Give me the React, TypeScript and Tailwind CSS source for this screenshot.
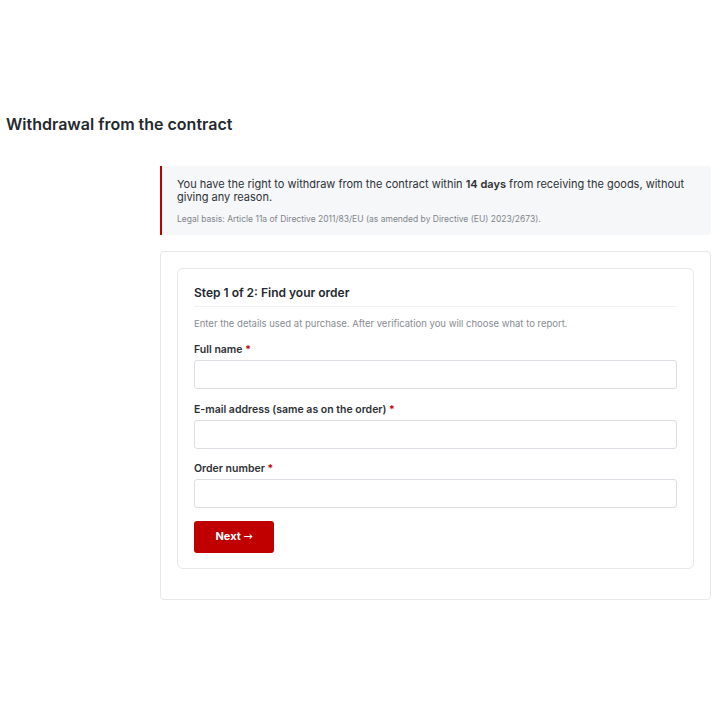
export default function App() {
  const fields = [
    { label: "Full name", type: "text" },
    { label: "E-mail address (same as on the order)", type: "email" },
    { label: "Order number", type: "text" },
  ];

  return (
    <div className="min-h-[720px] bg-white px-[6px] pt-[114px] font-['Inter',sans-serif] text-[#1f2328]">
      <h1 className="text-[16px] font-semibold leading-[20px] text-[#24292f]">
        Withdrawal from the contract
      </h1>

      <div className="ml-[154px] mr-[3px] mt-[32px]">
        <div className="rounded-r-[3px] border-l-2 border-[#c00000] bg-[#f6f7f9] pb-[10px] pl-[15px] pr-[16px] pt-[12px]">
          <p className="text-[11px] leading-[13px] text-[#2d3136]">
            You have the right to withdraw from the contract within <b className="font-semibold">14 days</b> from
            receiving the goods, without giving any reason.
          </p>
          <p className="mt-[9px] text-[8.5px] leading-[12px] text-[#80858c]">
            Legal basis: Article 11a of Directive 2011/83/EU (as amended by Directive (EU) 2023/2673).
          </p>
        </div>

        <div className="mt-[16px] rounded-[4px] border border-[#e6e8eb] px-[16px] pb-[30px] pt-[16px]">
          <div className="rounded-[6px] border border-[#e6e8eb] px-[16px] pb-[15px] pt-[16px]">
            <h2 className="border-b border-[#eff1f3] pb-[5px] text-[12px] font-semibold leading-[16px] text-[#24292f]">
              Step 1 of 2: Find your order
            </h2>
            <p className="mt-[10px] text-[9.5px] leading-[13px] text-[#878c93]">
              Enter the details used at purchase. After verification you will choose what to report.
            </p>

            {fields.map((f, i) => (
              <div key={f.label} className={i === 0 ? "mt-[13px]" : "mt-[13.5px]"}>
                <label className="block text-[10.5px] font-semibold leading-[13px] text-[#2d3136]">
                  {f.label} <span className="text-[#c00000]">*</span>
                </label>
                <input
                  type={f.type}
                  className="mt-[4px] block h-[29px] w-full rounded-[3px] border border-[#dcdfe3] bg-white px-2 text-[11px] outline-none"
                />
              </div>
            ))}

            <button className="mt-[13px] h-[32px] w-[80px] rounded-[3px] bg-[#c00000] text-[11px] font-bold text-white">
              Next <span className="font-['DejaVu_Sans',sans-serif] font-normal">→</span>
            </button>
          </div>
        </div>
      </div>
    </div>
  );
}
